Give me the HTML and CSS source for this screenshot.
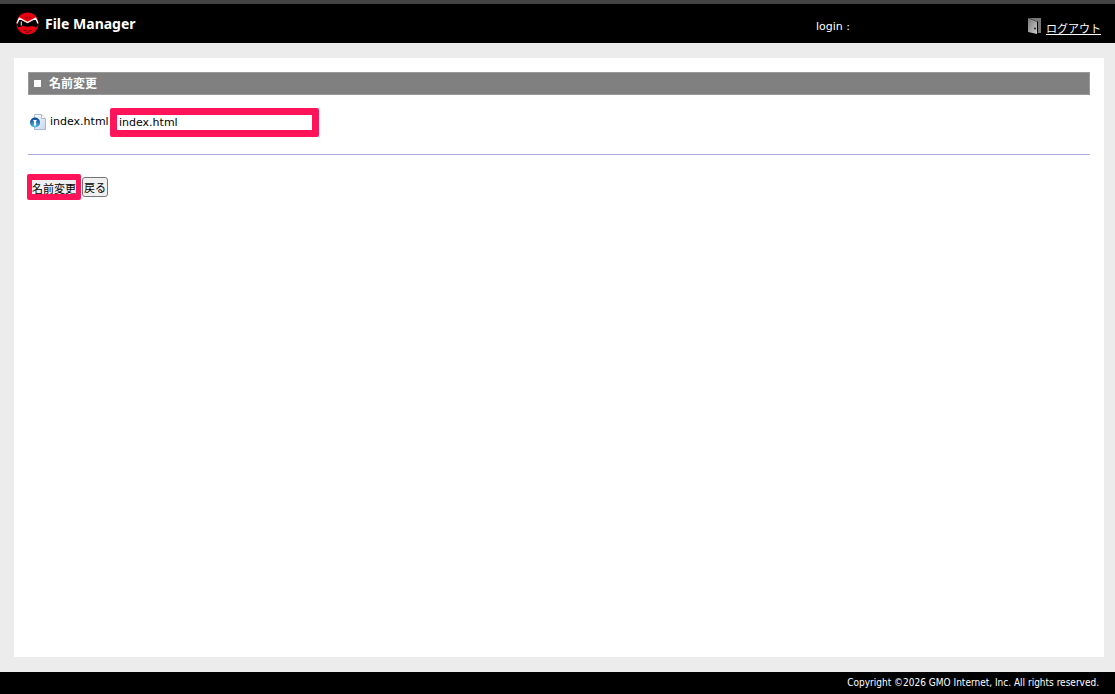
FILE: index.html
```html
<!DOCTYPE html>
<html lang="ja">
<head>
<meta charset="utf-8">
<title>File Manager</title>
<link rel="stylesheet" href="styles.css">
</head>
<body>
<header class="header">
  <div class="brand">
    <svg class="brand-logo" viewBox="0 0 24 24" aria-hidden="true">
      <circle cx="12" cy="12" r="11.500" fill="#e60012"/>
      <path d="M0 12 3.500 7 12 11.500 20.500 7 24 12 21.500 16 17 14.500 12 15.500 7 14.500 2.500 16Z" fill="#000"/>
      <path d="M1 12 3.500 6.500 12 11 20.500 6.500 23 12" fill="none" stroke="#fff" stroke-width="1.400"/>
      <path d="M5.500 10v4" stroke="#ddd" stroke-width="1.200"/>
      <path d="M9.500 6h2M12 4.500v2M13.500 6h1.500M8 19l3 1M13 20l3-1M11 21.500h2" stroke="#400" fill="none"/>
    </svg>
    <span class="brand-name">File Manager</span>
  </div>
  <span class="login">login :</span>
  <a class="logout" href="#">
    <svg class="logout-icon" viewBox="0 0 14 18" aria-hidden="true">
      <defs><linearGradient id="door" x2="1" y2="1"><stop stop-color="#777"/><stop offset="1" stop-color="#ccc"/></linearGradient></defs>
      <path d="M1 1h12v15H9.500V5Z" fill="#777"/>
      <path d="M9.500 4.500v11" stroke="#000" stroke-width="1"/>
      <path d="M0 1 9 5v12L0 15Z" fill="url(#door)"/>
      <circle cx="7" cy="11.500" r="1" fill="#222"/>
    </svg>
    <span class="logout-text">ログアウト</span>
  </a>
</header>
<main class="panel">
  <h1 class="title"><span class="title-mark"></span>名前変更</h1>
  <form class="form">
    <div class="rename-row">
      <svg class="file-icon" viewBox="0 0 16 17" aria-hidden="true">
        <defs>
          <radialGradient id="ball" cx=".5" cy=".9" r=".8"><stop stop-color="#5cc8f5"/><stop offset="1" stop-color="#12509c"/></radialGradient>
          <linearGradient id="sheet" x2="1" y2="1"><stop stop-color="#fff"/><stop offset="1" stop-color="#c3d3ee"/></linearGradient>
        </defs>
        <path d="M4.500.500h7l4 4v11h-11Z" fill="url(#sheet)" stroke="#a9bad8"/>
        <path d="M11.500.500v4h4" fill="#fff" stroke="#a9bad8"/>
        <circle cx="5" cy="8.500" r="5" fill="url(#ball)"/>
        <path d="M3 6h4L6 7.500v4H4v-4Z" fill="#fff"/>
      </svg>
      <label class="file-name" for="name">index.html</label>
      <input class="name-input" id="name" type="text" value="index.html">
    </div>
    <div class="actions">
      <button class="button button-primary" type="submit">名前変更</button>
      <button class="button" type="button">戻る</button>
    </div>
  </form>
</main>
<footer class="footer">Copyright ©2026 GMO Internet, Inc. All rights reserved.</footer>
</body>
</html>
```
FILE: styles.css
```css
* {
  box-sizing: border-box;
}

body {
  display: flex;
  flex-direction: column;
  min-height: 100vh;
  margin: 0;
  background: #ececec;
  color: #000;
  font: 11px/16px "DejaVu Sans", "Noto Sans CJK JP", sans-serif;
}

.header {
  display: flex;
  align-items: center;
  padding: 4px 14px 4px 16px;
  border-top: 4px solid #444;
  background: #000;
  color: #fff;
}

.brand {
  display: flex;
  align-items: center;
  gap: 6px;
  height: 31px;
}

.brand-logo {
  width: 23px;
  height: 23px;
}

.brand-name {
  font: bold 14px/20px "Noto Sans", sans-serif;
}

.login {
  width: 212px;
  margin-left: auto;
  padding-top: 6px;
}

.logout {
  display: flex;
  align-items: flex-end;
  gap: 4px;
  padding-top: 8px;
  color: #fff;
  font-size: 11px;
  text-decoration: none;
}

.logout-icon {
  width: 14px;
  height: 18px;
  margin-bottom: 3px;
}

.logout-text {
  text-decoration: underline;
}

.panel {
  flex: 1;
  margin: 15px 11px 15px 14px;
  padding: 14px;
  background: #fff;
}

.title {
  display: flex;
  align-items: center;
  gap: 8px;
  margin: 0;
  padding: 3px 5px 2px;
  border: 1px solid #999;
  background: #808080;
  color: #fff;
  font-size: 12px;
  line-height: 16px;
}

.title-mark {
  width: 7px;
  height: 7px;
  margin-bottom: 2px;
  background: #fff;
}

.rename-row {
  display: flex;
  align-items: center;
  padding: 13px 2px 17px;
  border-bottom: 1px solid #aaaadd;
}

.file-icon {
  width: 16px;
  height: 17px;
  margin-right: 4px;
}

.file-name {
  width: 60px;
  padding-bottom: 2px;
}

.name-input {
  width: 209px;
  height: 29px;
  padding: 0 2px;
  border: 7px solid #ff145a;
  border-radius: 2px;
  background: #fff;
  color: #000;
  font: inherit;
}

.actions {
  display: flex;
  align-items: center;
  gap: 1px;
  padding-top: 19px;
  margin-left: -1px;
}

.button {
  height: 20px;
  padding: 0 1px;
  border: 1px solid #767676;
  border-radius: 3px;
  background: #efefef;
  color: #000;
  font: 11px/16px "Noto Sans CJK JP", sans-serif;
}

.button-primary {
  height: 26px;
  padding: 0;
  border: 6px solid #ff145a;
  border-width: 6px 5px;
  border-radius: 2px;
}

.footer {
  padding: 3px 16px;
  background: #000;
  color: #fff;
  font-family: "DejaVu Sans Condensed", sans-serif;
  font-size: 10px;
  text-align: right;
}
```
